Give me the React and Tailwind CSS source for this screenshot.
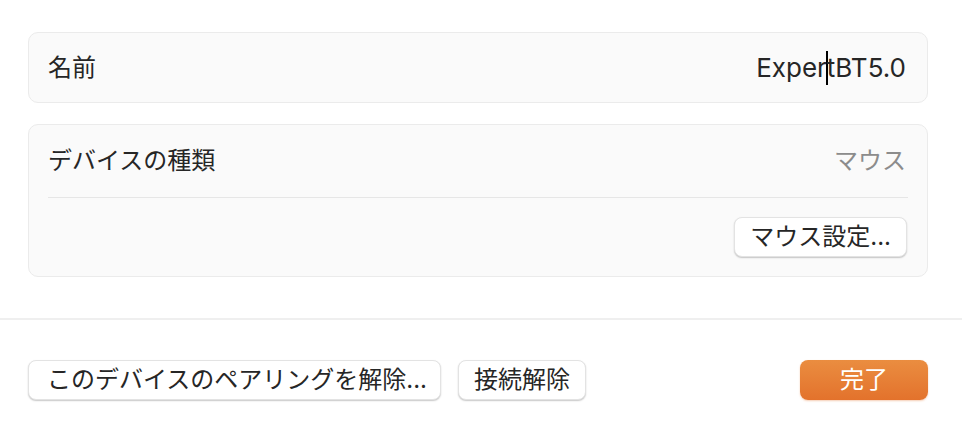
import React from "react";

const font = { fontFamily: '"Inter", "Noto Sans CJK JP", sans-serif' };

const Btn = ({ children, className = "" }) => (
  <button
    className={`h-[40px] rounded-[8px] border border-[#e3e3e3] bg-white text-[24px] leading-none text-[#262626] shadow-[0_1px_1.5px_rgba(0,0,0,0.22)] ${className}`}
  >
    {children}
  </button>
);

const App = () => {
  return (
    <div className="w-full h-[430px] bg-white overflow-hidden" style={font}>
      <div className="pt-[32px] pl-[28px] pr-[34px]">
        {/* 名前 */}
        <div className="h-[71px] rounded-[10px] border border-[#ebebeb] bg-[#fafafa] flex items-center justify-between pl-[19px] pr-[21px]">
          <span className="text-[24px] text-[#262626]">名前</span>
          <span className="text-[26px] text-[#262626] flex items-center">
            Exper
            <span className="inline-block w-[2px] h-[34px] bg-black -mx-[1px]" />
            tBT5.0
          </span>
        </div>

        {/* デバイスの種類 */}
        <div className="mt-[21px] rounded-[10px] border border-[#ebebeb] bg-[#fafafa]">
          <div className="h-[72px] flex items-center justify-between pl-[19px] pr-[21px]">
            <span className="text-[24px] text-[#262626]">デバイスの種類</span>
            <span className="text-[24px] text-[#8c8c8c]">マウス</span>
          </div>
          <div className="mx-[19px] h-px bg-[#e6e6e6]" />
          <div className="h-[78px] flex items-center justify-end pr-[20px]">
            <Btn className="px-[15px]">マウス設定...</Btn>
          </div>
        </div>
      </div>

      <div className="mt-[41px] h-[2px] bg-[#efefef]" />

      <div className="mt-[40px] pl-[28px] pr-[34px] flex items-center gap-[17px]">
        <Btn className="pl-[18px] pr-[13px]">このデバイスのペアリングを解除...</Btn>
        <Btn className="px-[15px]">接続解除</Btn>
        <button className="ml-auto w-[128px] h-[40px] rounded-[8px] bg-gradient-to-b from-[#ea8d40] to-[#e3722c] text-white text-[24px] leading-none shadow-[0_1px_2px_rgba(227,114,44,0.35)]">
          完了
        </button>
      </div>
    </div>
  );
};

export default App;
